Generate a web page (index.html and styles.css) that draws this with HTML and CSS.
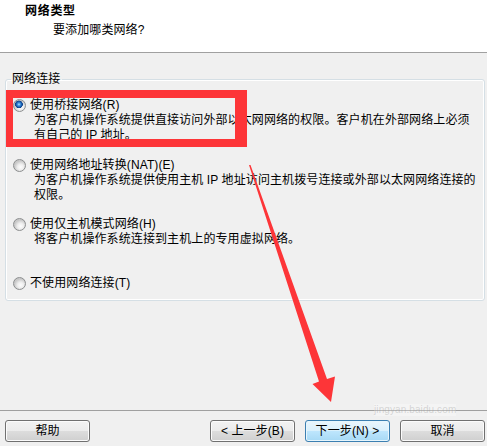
FILE: index.html
```html
<!DOCTYPE html>
<html lang="zh-CN">
<head>
<meta charset="utf-8">
<title>新建虚拟机向导 - 网络类型</title>
<link rel="stylesheet" href="styles.css">
</head>
<body>
<div class="wizard">
  <header class="head">
    <div class="title">网络类型</div>
    <div class="subtitle">要添加哪类网络?</div>
  </header>

  <fieldset class="group">
    <legend class="legend">网络连接</legend>

    <div class="option opt-bridge">
      <div class="choice"><span class="radio checked"></span><span class="label">使用桥接网络(R)</span></div>
      <div class="desc">为客户机操作系统提供直接访问外部以太网网络的权限。客户机在外部网络上必须<br>有自己的 IP 地址。</div>
    </div>

    <div class="option opt-nat">
      <div class="choice"><span class="radio"></span><span class="label">使用网络地址转换(NAT)(E)</span></div>
      <div class="desc">为客户机操作系统提供使用主机 IP 地址访问主机拨号连接或外部以太网网络连接的<br>权限。</div>
    </div>

    <div class="option opt-host">
      <div class="choice"><span class="radio"></span><span class="label">使用仅主机模式网络(H)</span></div>
      <div class="desc">将客户机操作系统连接到主机上的专用虚拟网络。</div>
    </div>

    <div class="option opt-none">
      <div class="choice"><span class="radio"></span><span class="label">不使用网络连接(T)</span></div>
    </div>
  </fieldset>

  <footer class="foot">
    <button class="btn">帮助</button>
    <button class="btn btn-back">&lt; 上一步(B)</button>
    <button class="btn btn-default">下一步(N) &gt;</button>
    <button class="btn">取消</button>
  </footer>

  <span class="watermark">jingyan.baidu.com</span>

  <svg class="annot" width="487" height="446" viewBox="0 0 487 446" aria-hidden="true">
    <path fill="#fd3538" fill-rule="evenodd" d="M6 90H247V147H6Z M13 98V139H235V98Z"/>
    <polygon fill="#fd3538" points="249,165 250.5,165 327,379 335,376.5 331,402 312.5,384 319,381.5"/>
  </svg>
</div>
</body>
</html>
```

FILE: styles.css
```css
* { box-sizing: border-box; }

html, body {
  margin: 0;
  padding: 0;
  background: #f0f0f0;
}

body {
  font-family: "Liberation Sans", "Noto Sans CJK SC", sans-serif;
  font-size: 12px;
  line-height: 15px;
  letter-spacing: 0.1px;
  color: #000;
}

.wizard {
  position: relative;
  width: 487px;
  height: 446px;
  display: flex;
  flex-direction: column;
  overflow: hidden;
}

/* header */
.head {
  height: 53px;
  background: #fff;
  border-bottom: 1px solid #a0a0a0;
  padding: 4px 0 0 25px;
}

.title {
  font-weight: bold;
  letter-spacing: 0.7px;
}

.subtitle {
  margin-top: 4px;
  padding-left: 28px;
}

/* group box */
.group {
  margin: 19px 0 0 5px;
  width: 480px;
  padding: 11px 7px 9px 7px;
  border: 1px solid #d5dfe5;
  border-radius: 3px;
  box-shadow: inset 0 0 0 1px #fff;
  min-width: 0;
}

.legend {
  padding: 0 2px 0 1px;
  margin-left: -2px;
  line-height: 15px;
}

.option + .option { margin-top: 15px; }
.opt-host { margin-top: 14px !important; }
.opt-none { margin-top: 29px !important; }

.choice {
  display: flex;
  align-items: center;
  height: 15px;
}

.radio {
  flex: none;
  width: 13px;
  height: 13px;
  margin-right: 4px;
  border: 1px solid #8c8e8f;
  border-radius: 50%;
  background: radial-gradient(circle at 60% 65%, #fdfdfd 0, #eeeeee 3px, #d6d6d6 5px, #c9c9c9 6px);
}

.radio.checked {
  background:
    radial-gradient(circle at 45% 40%, #c6e8ff 0, #4aa0e8 1.2px, #1c62b4 2.6px, #0d3f86 3.6px, rgba(0,0,0,0) 4.1px),
    radial-gradient(circle at 60% 65%, #fdfdfd 0, #eeeeee 3px, #d6d6d6 5px, #c9c9c9 6px);
}

.desc {
  padding-left: 21px;
  white-space: nowrap;
}

/* footer */
.foot {
  margin-top: auto;
  height: 36px;
  border-top: 1px solid #a0a0a0;
  padding: 9px 2px 0 5px;
  display: flex;
  align-items: flex-start;
  gap: 10px;
}

.btn {
  width: 85px;
  height: 22px;
  padding: 0;
  font: inherit;
  letter-spacing: 0.1px;
  color: #000;
  border: 1px solid #707070;
  border-radius: 3px;
  box-shadow: inset 0 0 0 1px #fbfbfb;
  background: linear-gradient(#f2f2f2 0%, #ebebeb 50%, #dddddd 50%, #cfcfcf 100%);
}

.btn-back { margin-left: auto; }

.btn-default {
  border-color: #3c7fb1;
  box-shadow: inset 0 0 0 1px #e7f6fd;
  background: linear-gradient(#eaf6fd 0%, #d9f0fc 50%, #bee6fd 50%, #a7d9f5 100%);
}

/* overlays */
.watermark {
  position: absolute;
  left: 374px;
  top: 404px;
  font-size: 10px;
  line-height: 12px;
  color: rgba(150, 150, 150, 0.35);
  background: rgba(255, 255, 255, 0.25);
  pointer-events: none;
}

.annot {
  position: absolute;
  left: 0;
  top: 0;
  pointer-events: none;
}
```
